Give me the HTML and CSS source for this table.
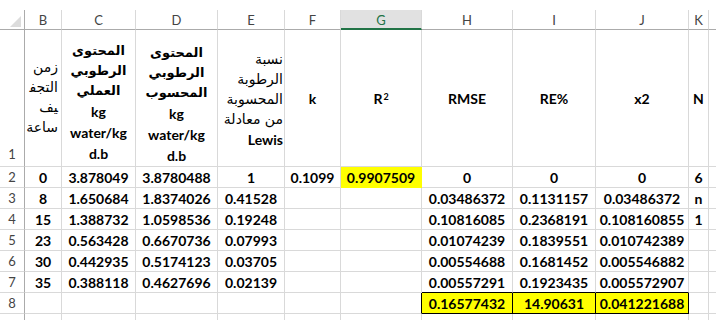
FILE: index.html
```html
<!DOCTYPE html>
<html lang="ar">
<head>
<meta charset="utf-8">
<title>Sheet</title>
<link rel="stylesheet" href="styles.css">
</head>
<body>
<div class="sheet" dir="ltr">
  <!-- column headers -->
  <div class="c ch corner"><span class="tri"></span></div>
  <div class="c ch">B</div>
  <div class="c ch">C</div>
  <div class="c ch">D</div>
  <div class="c ch">E</div>
  <div class="c ch">F</div>
  <div class="c ch sel">G</div>
  <div class="c ch">H</div>
  <div class="c ch">I</div>
  <div class="c ch">J</div>
  <div class="c ch">K</div>
  <div class="c ch"></div>

  <!-- row 1 -->
  <div class="c rh rh1">1</div>
  <div class="c hd hd-b" dir="rtl"><span>زمن</span><span>التجف&zwj;</span><span>&zwj;يف</span><span>ساعة</span></div>
  <div class="c hd hd-c"><span class="ar">المحتوى</span><span class="ar">الرطوبي</span><span class="ar">العملي</span><span>kg</span><span>water/kg</span><span>d.b</span></div>
  <div class="c hd hd-d"><span class="ar">المحتوى</span><span class="ar">الرطوبي</span><span class="ar">المحسوب</span><span>kg</span><span>water/kg</span><span>d.b</span></div>
  <div class="c hd hd-e" dir="rtl"><span class="ar">نسبة</span><span class="ar">الرطوبة</span><span class="ar">المحسوبة</span><span class="ar">من معادلة</span><span class="lat">Lewis</span></div>
  <div class="c">k</div>
  <div class="c">R<sup>2</sup></div>
  <div class="c">RMSE</div>
  <div class="c">RE%</div>
  <div class="c">x2</div>
  <div class="c">N</div>
  <div class="c"></div>

  <!-- row 2 -->
  <div class="c rh">2</div>
  <div class="c">0</div>
  <div class="c">3.878049</div>
  <div class="c">3.8780488</div>
  <div class="c">1</div>
  <div class="c">0.1099</div>
  <div class="c yel">0.9907509</div>
  <div class="c">0</div>
  <div class="c">0</div>
  <div class="c">0</div>
  <div class="c">6</div>
  <div class="c"></div>

  <!-- row 3 -->
  <div class="c rh">3</div>
  <div class="c">8</div>
  <div class="c">1.650684</div>
  <div class="c">1.8374026</div>
  <div class="c">0.41528</div>
  <div class="c"></div>
  <div class="c"></div>
  <div class="c">0.03486372</div>
  <div class="c">0.1131157</div>
  <div class="c">0.03486372</div>
  <div class="c">n</div>
  <div class="c"></div>

  <!-- row 4 -->
  <div class="c rh">4</div>
  <div class="c">15</div>
  <div class="c">1.388732</div>
  <div class="c">1.0598536</div>
  <div class="c">0.19248</div>
  <div class="c"></div>
  <div class="c"></div>
  <div class="c">0.10816085</div>
  <div class="c">0.2368191</div>
  <div class="c">0.108160855</div>
  <div class="c">1</div>
  <div class="c"></div>

  <!-- row 5 -->
  <div class="c rh">5</div>
  <div class="c">23</div>
  <div class="c">0.563428</div>
  <div class="c">0.6670736</div>
  <div class="c">0.07993</div>
  <div class="c"></div>
  <div class="c"></div>
  <div class="c">0.01074239</div>
  <div class="c">0.1839551</div>
  <div class="c">0.010742389</div>
  <div class="c"></div>
  <div class="c"></div>

  <!-- row 6 -->
  <div class="c rh">6</div>
  <div class="c">30</div>
  <div class="c">0.442935</div>
  <div class="c">0.5174123</div>
  <div class="c">0.03705</div>
  <div class="c"></div>
  <div class="c"></div>
  <div class="c">0.00554688</div>
  <div class="c">0.1681452</div>
  <div class="c">0.005546882</div>
  <div class="c"></div>
  <div class="c"></div>

  <!-- row 7 -->
  <div class="c rh">7</div>
  <div class="c">35</div>
  <div class="c">0.388118</div>
  <div class="c">0.4627696</div>
  <div class="c">0.02139</div>
  <div class="c"></div>
  <div class="c"></div>
  <div class="c bb">0.00557291</div>
  <div class="c bb">0.1923435</div>
  <div class="c bb">0.005572907</div>
  <div class="c"></div>
  <div class="c"></div>

  <!-- row 8 -->
  <div class="c rh">8</div>
  <div class="c"></div>
  <div class="c"></div>
  <div class="c"></div>
  <div class="c"></div>
  <div class="c"></div>
  <div class="c br"></div>
  <div class="c tot">0.16577432</div>
  <div class="c tot">14.90631</div>
  <div class="c tot">0.041221688</div>
  <div class="c"></div>
  <div class="c"></div>

  <!-- row 9 (partial) -->
  <div class="c rh"></div>
  <div class="c"></div>
  <div class="c"></div>
  <div class="c"></div>
  <div class="c"></div>
  <div class="c"></div>
  <div class="c"></div>
  <div class="c"></div>
  <div class="c"></div>
  <div class="c"></div>
  <div class="c"></div>
  <div class="c"></div>
</div>
</body>
</html>
```

FILE: styles.css
```css
html, body {
  margin: 0;
  padding: 0;
  background: #ffffff;
}

body {
  font-family: Lato, "DejaVu Sans", sans-serif;
  width: 716px;
  height: 320px;
  overflow: hidden;
}

.sheet {
  display: grid;
  grid-template-columns: 25px 37px 74px 82px 67px 56px 81px 91px 83px 93px 20px 40px;
  grid-template-rows: 20px 137px repeat(8, 21px);
  margin-top: 10px;
  width: 716px;
  overflow: hidden;
}

.c {
  box-sizing: border-box;
  border-right: 1px solid #d9d9d9;
  border-bottom: 1px solid #d9d9d9;
  display: flex;
  align-items: center;
  justify-content: center;
  font-size: 14px;
  font-weight: 700;
  color: #000;
  white-space: nowrap;
  overflow: hidden;
  min-width: 0;
}

.ch {
  font-weight: 400;
  font-size: 13px;
  color: #444;
  border-bottom-color: #ababab;
  padding-top: 1px;
}

.sel {
  background: #e1e1e1;
  color: #217346;
  border-bottom: 2px solid #217346;
}

.corner {
  justify-content: flex-end;
  align-items: flex-end;
  padding: 0 3px 2px 0;
  border-right-color: #ababab;
}

.tri {
  width: 0;
  height: 0;
  border-left: 11px solid transparent;
  border-bottom: 11px solid #dcdcdc;
}

.rh {
  font-weight: 400;
  font-size: 13px;
  color: #444;
  border-right-color: #ababab;
}

.rh1 {
  align-items: flex-end;
  padding-bottom: 4px;
}

.hd {
  display: block;
  white-space: nowrap;
}

.hd span {
  display: block;
  height: 21px;
  line-height: 21px;
}

.hd .ar {
  font-family: "DejaVu Sans", sans-serif;
  font-size: 13px;
  height: 20px;
  line-height: 20px;
}

.hd-b {
  padding: 27px 3px 0 0;
  text-align: right;
}

.hd-b span {
  font-family: "DejaVu Sans", sans-serif;
  font-weight: 400;
  font-size: 14px;
  height: 20px;
  line-height: 20px;
}

.hd-c {
  padding-top: 11px;
  text-align: center;
}

.hd-d {
  padding-top: 13px;
  text-align: center;
}

.hd-e {
  padding: 19px 1px 0 0;
  text-align: right;
}

.hd-e .ar {
  font-weight: 400;
  font-size: 14px;
}

sup {
  font-size: 9px;
  line-height: 0;
  position: relative;
  top: -1px;
  margin-left: 1px;
}

.yel {
  background: #ffff00;
  border-right-color: #ffff00;
  border-bottom-color: #ffff00;
}

.bb {
  border-bottom-color: #000;
}

.br {
  border-right-color: #000;
}

.tot {
  background: #ffff00;
  border-right-color: #000;
  border-bottom-color: #000;
}
```
